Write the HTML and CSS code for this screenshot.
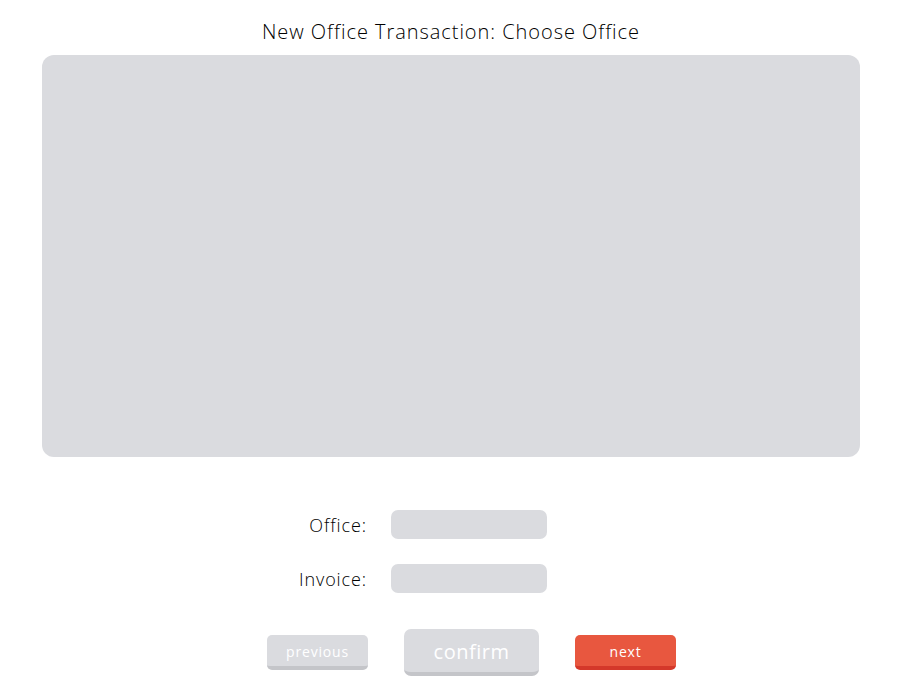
FILE: index.html
```html
<!DOCTYPE html>
<html>
<head>
<meta charset="utf-8">
<link rel="stylesheet" href="styles.css">
</head>
<body>
<div class="page">
  <h1 class="title">New Office Transaction: Choose Office</h1>
  <div class="panel"></div>
  <div class="form">
    <label class="label">Office:</label>
    <div class="input"></div>
    <label class="label">Invoice:</label>
    <div class="input"></div>
  </div>
  <div class="actions">
    <button class="btn btn-grey btn-small">previous</button>
    <button class="btn btn-grey btn-large">confirm</button>
    <button class="btn btn-red btn-small">next</button>
  </div>
</div>
</body>
</html>
```
FILE: styles.css
```css
html, body {
  margin: 0;
  padding: 0;
  background: #ffffff;
}
body {
  font-family: "Open Sans", "Liberation Sans", sans-serif;
  color: #000;
}
.page {
  width: 900px;
  height: 700px;
  display: flex;
  flex-direction: column;
}
.title {
  margin: 19px 0 0 2px;
  font-size: 20px;
  line-height: 26px;
  font-weight: 300;
  text-align: center;
  letter-spacing: 0.95px;
  color: #000;
}
.panel {
  margin: 10px 0 0 42px;
  width: 818px;
  height: 402px;
  background: #dadbdf;
  border-radius: 12px;
}
.form {
  margin: 53px 0 0 0;
  display: grid;
  grid-template-columns: 367px 156px;
  column-gap: 24px;
  row-gap: 25px;
  align-items: center;
}
.label {
  justify-self: end;
  font-size: 18px;
  font-weight: 300;
  letter-spacing: 0.9px;
  color: #000;
}
.input {
  height: 29px;
  background: #dadbdf;
  border-radius: 7px;
}
.actions {
  margin: 36px 0 0 267px;
  display: flex;
  align-items: center;
  gap: 36px;
}
.btn {
  border: none;
  padding: 0;
  color: #fff;
  font-family: "Open Sans", "Liberation Sans", sans-serif;
  font-weight: 400;
  cursor: pointer;
}
.btn-grey {
  background: #dadbdf;
  border-bottom: 4px solid #c4c5c9;
}
.btn-red {
  background: #e8573f;
  border-bottom: 4px solid #d4382a;
}
.btn-small {
  width: 101px;
  height: 35px;
  border-radius: 5px;
  font-size: 14px;
  letter-spacing: 0.8px;
  padding-top: 2px;
}
.btn-large {
  width: 135px;
  height: 47px;
  border-radius: 7px;
  font-size: 20px;
  letter-spacing: 0.5px;
  padding-top: 2px;
}
```
